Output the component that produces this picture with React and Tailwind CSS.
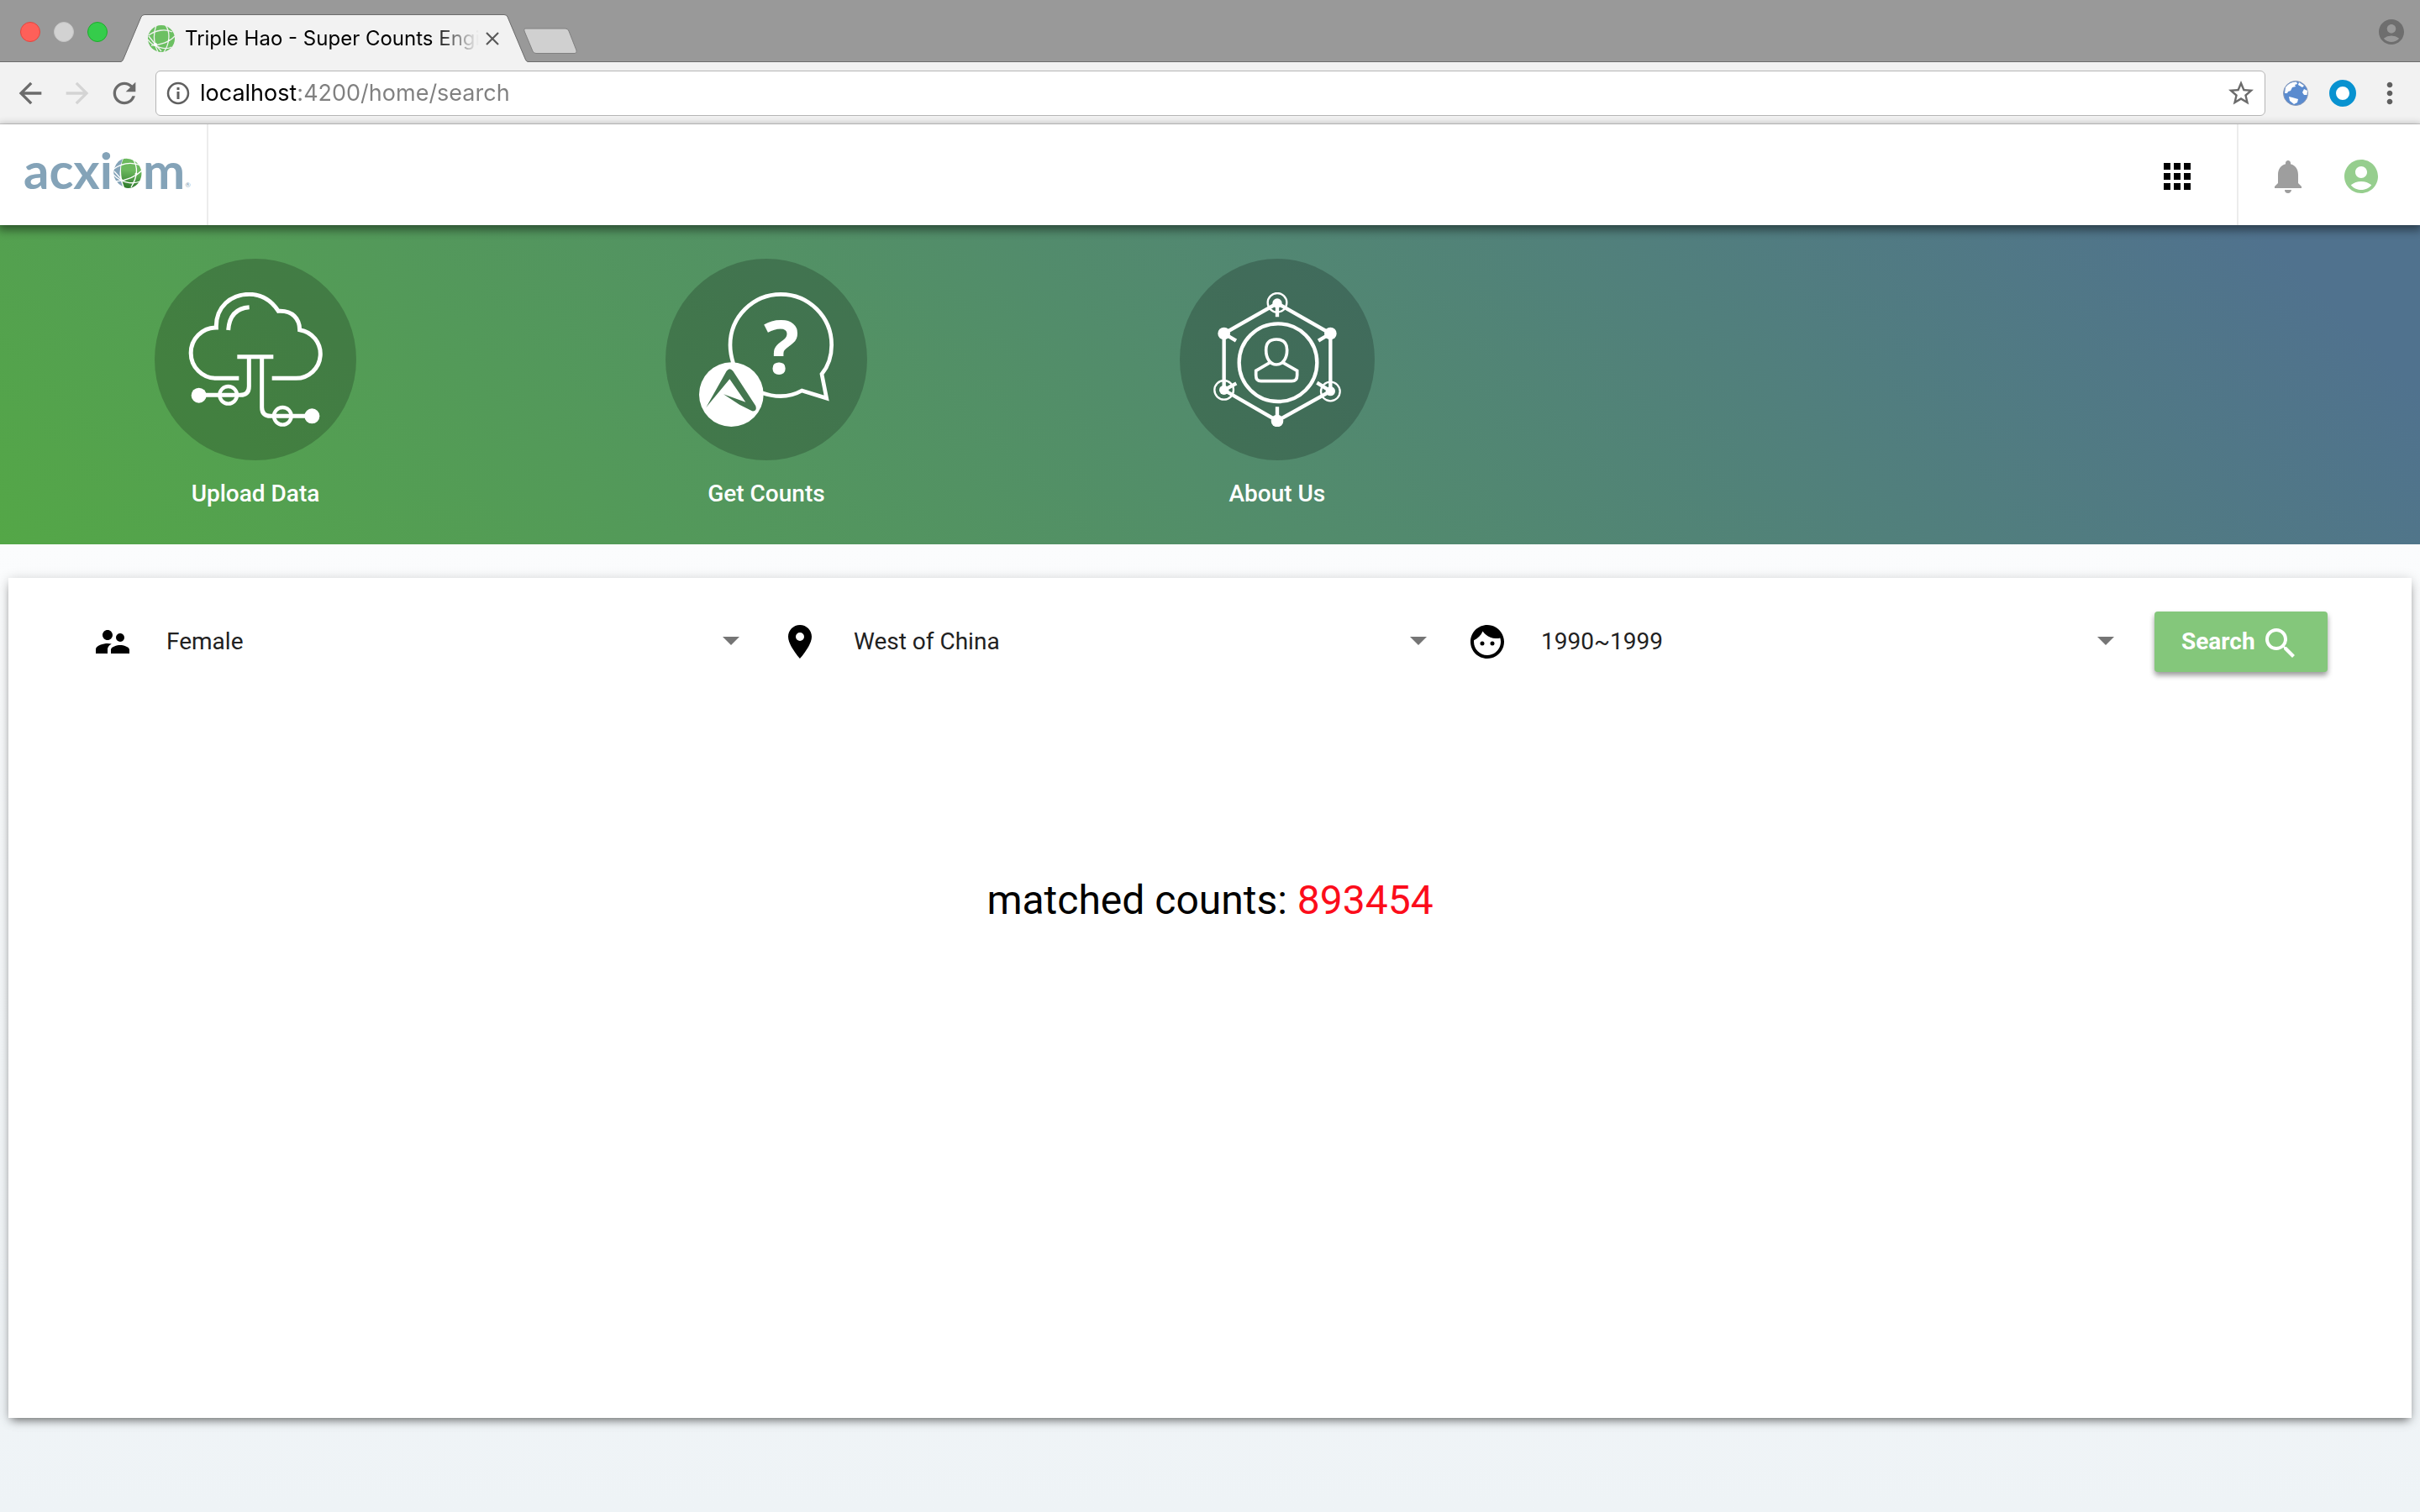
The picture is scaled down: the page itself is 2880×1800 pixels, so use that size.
import React from "react";
import {
  MdAccountCircle,
  MdApps,
  MdArrowBack,
  MdArrowForward,
  MdFace,
  MdMoreVert,
  MdNotifications,
  MdPlace,
  MdRefresh,
  MdSearch,
  MdStarBorder,
  MdSupervisorAccount,
} from "react-icons/md";

function Favicon() {
  return (
    <svg viewBox="0 0 32 32" className="size-8 shrink-0" fill="none" aria-hidden="true">
      <circle cx="16" cy="16" r="16" fill="#6cc062" />
      <g stroke="#f2f2f2" strokeWidth="1.3">
        <path d="M10 0C7 8 6 20 12 32" />
        <path d="M21 0C27 8 26 22 19 32" />
        <path d="M1 12C9 6 20 4 29 8" />
        <path d="M0 17C6 26 22 30 28 26" />
        <path d="M4 24C14 24 26 20 32 13" />
        <path d="M1 13L9 23L16 31" />
      </g>
      <circle cx="9" cy="23" r="2" fill="#fff" />
      <circle cx="25" cy="18" r="1" fill="#fff" />
    </svg>
  );
}

function BrowserTabs() {
  return (
    <div className="flex h-[74px] items-end gap-4 border-b border-[#6b6b6b] bg-[#999999] pl-6">
      <div className="flex gap-4 self-center pt-0.5">
        <button aria-label="Close window" className="size-6 rounded-full border border-[#e2463f] bg-[#fe6059]" />
        <button aria-label="Minimize window" className="size-6 rounded-full border border-[#c4c4c4] bg-[#d2d2d2]" />
        <button aria-label="Zoom window" className="size-6 rounded-full border border-[#1dad2b] bg-[#35cc4b]" />
      </div>
      <div className="relative -mb-px h-[57px] w-[484px]">
        <svg viewBox="0 0 484 57" preserveAspectRatio="none" className="absolute inset-0 size-full" aria-hidden="true">
          <path
            d="M0 56.5Q2 56 3 53L24 3Q25.500 .5 28 .5H456Q459 .5 460 3L481 53Q482 56 484 56.500V57H0Z"
            fill="#f2f2f2"
          />
          <path
            d="M0 56.5Q2 56 3 53L24 3Q25.500 .5 28 .5H456Q459 .5 460 3L481 53Q482 56 484 56.500"
            fill="none"
            stroke="#6b6b6b"
          />
        </svg>
        <div className="relative flex h-full items-center pr-8 pl-8">
          <Favicon />
          <span className="ml-3 w-[350px] overflow-hidden font-[Inter,sans-serif] text-[24px] leading-8 whitespace-nowrap text-black [mask-image:linear-gradient(to_right,black_84%,transparent)]">
            Triple Hao - Super Counts Engine
          </span>
          <button aria-label="Close tab" className="ml-2">
            <svg viewBox="0 0 16 16" className="size-4" stroke="#5a5a5a" strokeWidth="2.2" aria-hidden="true">
              <path d="M1 1L15 15M15 1L1 15" />
            </svg>
          </button>
        </div>
      </div>
      <button aria-label="New tab" className="-ml-[22px] mb-2">
        <svg viewBox="0 0 66 32" className="h-8 w-[66px]" aria-hidden="true">
          <path
            d="M3 1H51Q54 1 55 4L64 27Q65 30.500 62 30.500H16Q13 30.500 12 28L2 4Q1 1 3 1Z"
            fill="#d0d0d0"
            stroke="#808080"
          />
        </svg>
      </button>
      <button aria-label="Profile" className="mr-4 ml-auto self-center pt-0.5 text-[#6e6e6e]">
        <MdAccountCircle className="size-9" />
      </button>
    </div>
  );
}

function BrowserToolbar() {
  return (
    <div className="flex h-[74px] items-center border-b border-[#d2d2d2] bg-[#f2f2f2] pr-4 pl-4">
      <button aria-label="Back" className="text-[#6b6b6b]">
        <MdArrowBack className="size-10" />
      </button>
      <button aria-label="Forward" className="ml-4 text-[#d4d4d4]">
        <MdArrowForward className="size-10" />
      </button>
      <button aria-label="Reload" className="ml-4 text-[#6b6b6b]">
        <MdRefresh className="size-10" />
      </button>
      <div className="ml-[17px] flex h-[54px] flex-1 items-center rounded-md border border-[#b5b5b5] bg-white pr-2.5 pl-3">
        <svg viewBox="0 0 28 28" className="size-7 shrink-0" aria-hidden="true">
          <circle cx="14" cy="14" r="12" fill="none" stroke="#5f5f5f" strokeWidth="2.500" />
          <path d="M12.500 12H15.500V21H12.500ZM12.500 7H15.500V10H12.500Z" fill="#5f5f5f" />
        </svg>
        <input
          aria-label="Address"
          defaultValue="localhost:4200/home/search"
          className="ml-3 min-w-0 flex-1 bg-[linear-gradient(to_right,#000_114px,#808080_114px)] bg-clip-text font-[Inter,sans-serif] text-[27px] leading-10 text-transparent outline-none"
        />
        <button aria-label="Bookmark" className="text-[#6b6b6b]">
          <MdStarBorder className="size-9" />
        </button>
      </div>
      <button aria-label="Globe extension" className="ml-5">
        <svg viewBox="0 0 32 32" className="size-8" aria-hidden="true">
          <circle cx="16" cy="16" r="14.500" fill="#5a8bcf" stroke="#8a9ab8" />
          <path
            d="M4 9Q9 2 17 2.500L18 5L15 6L16 8L12 9L10 13L7 14L6 16L3 16ZM20 3L26 7L24 9L19 6ZM26 11L30 13L29.500 18L26 18L24 15ZM8 20L12 21L19 23L18 27L14 29L9 25Z"
            fill="#fff"
          />
        </svg>
      </button>
      <button aria-label="Ring extension" className="ml-6">
        <svg viewBox="0 0 32 32" className="size-8" aria-hidden="true">
          <circle cx="16" cy="16" r="12" fill="#fff" stroke="#0892d0" strokeWidth="8" />
        </svg>
      </button>
      <button aria-label="Menu" className="ml-5 text-[#5f5f5f]">
        <MdMoreVert className="size-10" />
      </button>
    </div>
  );
}

function Logo() {
  return (
    <a href="#home" aria-label="acxiom" className="flex items-end font-[Lato,sans-serif] text-[60px] leading-[60px] font-bold text-[#84a3b8]">
      <span>acxi</span>
      <svg viewBox="0 0 36 36" className="mb-2 size-9" fill="none" aria-hidden="true">
        <defs>
          <linearGradient id="globe" x1="0.5" y1="0" x2="0.4" y2="1">
            <stop offset="0.4" stopColor="#6cb95e" />
            <stop offset="1" stopColor="#2f7a2c" />
          </linearGradient>
        </defs>
        <path d="M12 1A18 18 0 0 0 12 34Q5 18 12 1Z" fill="#84a3b8" />
        <path d="M13 1A18 18 0 0 1 24 35Q18 37 14 35Q10 26 10 15Q10 6 13 1Z" fill="url(#globe)" />
        <g stroke="#fff" strokeWidth="1.300">
          <path d="M0 14C12 5 24 5 34 9" />
          <path d="M1 20C10 29 22 32 33 28" />
          <path d="M24 1C30 10 30 22 22 35" />
          <path d="M4 28C16 27 28 22 36 14" />
          <path d="M2 16L12 27" />
        </g>
        <circle cx="28" cy="19" r="1.500" fill="#fff" />
      </svg>
      <span>m</span>
      <span className="text-[8px] leading-6 font-normal">®</span>
    </a>
  );
}

function AppHeader() {
  return (
    <header className="relative z-10 flex h-[120px] items-stretch bg-white shadow-[0_4px_10px_2px_rgba(0,0,0,0.45)]">
      <div className="flex w-[248px] items-center border-r-2 border-[#ececec] pb-3 pl-7">
        <Logo />
      </div>
      <div className="ml-auto flex items-center pt-1 pr-[47px]">
        <button aria-label="Apps" className="text-black">
          <MdApps className="size-12" />
        </button>
      </div>
      <div className="flex items-center gap-[39px] border-l-2 border-[#ececec] pt-1 pr-[46px] pl-[35px]">
        <button aria-label="Notifications" className="text-[#9e9e9e]">
          <MdNotifications className="size-12" />
        </button>
        <button aria-label="Account" className="text-[#96ce8e]">
          <MdAccountCircle className="size-12" />
        </button>
      </div>
    </header>
  );
}

function CloudIcon() {
  return (
    <svg viewBox="192 174 480 480" className="size-40" fill="none" stroke="#fff" strokeWidth="15" aria-hidden="true">
      <path d="M373 481H292A90 90 0 0 1 292 300C290 225 345 181 410 181C455 181 490 205 514 241C565 238 590 270 590 308A87 87 0 0 1 577 481H491" />
      <path d="M335 309Q340 232 410 227" />
      <path d="M367 404H496" />
      <path d="M409 404V510Q409 541 378 541H230" />
      <path d="M455 404V585Q455 616 486 616H634" />
      <circle cx="335" cy="541" r="31" strokeWidth="13" />
      <circle cx="529" cy="616" r="31" strokeWidth="13" />
      <circle cx="230" cy="542" r="27" fill="#fff" stroke="none" />
      <circle cx="634" cy="616" r="27" fill="#fff" stroke="none" />
    </svg>
  );
}

function QuestionIcon() {
  return (
    <svg viewBox="186 174 480 480" className="size-40" fill="none" aria-hidden="true">
      <path
        d="M308 428C301 405 297 385 297 362A181 181 0 0 1 659 362C659 405 645 440 624 466L641 552L553 525C505 552 455 549 408 532"
        stroke="#fff"
        strokeWidth="14"
      />
      <text x="480" y="466" textAnchor="middle" fill="#fff" className="font-['Open_Sans',sans-serif] text-[265px] font-bold">
        ?
      </text>
      <circle cx="301" cy="539" r="115" fill="#fff" />
      <path
        d="M211 585L284 455Q295 440 307 455L388 580Q394 600 375 598L330 575L273 538L352 566L295 484Z"
        fill="#44764f"
      />
    </svg>
  );
}

function NetworkIcon() {
  return (
    <svg viewBox="192 174 456 480" className="h-40 w-[152px]" fill="none" stroke="#fff" strokeWidth="13" aria-hidden="true">
      <path d="M420 213L610 321V527L420 633L230 523V321Z" />
      <path d="M420 213V262M420 633V583M230 321L273 347M610 321L567 347M230 523L274 499M610 527L562 497" />
      <circle cx="423" cy="425" r="139" />
      <g strokeWidth="7">
        <circle cx="420" cy="211" r="34" />
        <circle cx="230" cy="523" r="34" />
        <circle cx="610" cy="528" r="34" />
      </g>
      <g fill="#fff" stroke="none">
        <circle cx="420" cy="213" r="17" />
        <circle cx="230" cy="321" r="22" />
        <circle cx="610" cy="321" r="22" />
        <circle cx="230" cy="523" r="17" />
        <circle cx="610" cy="527" r="17" />
        <circle cx="420" cy="633" r="22" />
      </g>
      <path d="M417 342C445 342 455 356 455 380C455 410 440 432 417 432C395 432 380 410 380 380C380 356 390 342 417 342Z" strokeWidth="11" />
      <path d="M394 425L344 454V470Q344 491 362 491H472Q491 491 491 470V454L440 425" strokeWidth="11" />
    </svg>
  );
}

const shortcuts = [
  { label: "Upload Data", Icon: CloudIcon },
  { label: "Get Counts", Icon: QuestionIcon },
  { label: "About Us", Icon: NetworkIcon },
];

function Banner() {
  return (
    <nav className="flex bg-[linear-gradient(45deg,#54a747_0%,#50728e_94%)] py-10">
      {shortcuts.map(({ label, Icon }) => (
        <a key={label} href={"#" + label.toLowerCase().replace(" ", "-")} className="flex w-[21.11%] flex-col items-center text-white">
          <span className="rounded-[50%] bg-black/20 p-10">
            <Icon />
          </span>
          <span className="mt-5 text-[28px] leading-10 font-medium">{label}</span>
        </a>
      ))}
    </nav>
  );
}

const filters = [
  { name: "Gender", Icon: MdSupervisorAccount, options: ["Female", "Male"] },
  { name: "Region", Icon: MdPlace, options: ["West of China", "East of China"] },
  { name: "Birth years", Icon: MdFace, options: ["1990~1999", "2000~2009"] },
];

function Filter({ name, Icon, options }) {
  return (
    <label className="flex flex-1 items-center gap-10 pr-12">
      <Icon className="size-12 shrink-0 text-black" />
      <span className="relative flex-1">
        <select aria-label={name} className="w-full appearance-none bg-transparent text-[28px] leading-10 text-[#212121] outline-none">
          {options.map((option) => (
            <option key={option}>{option}</option>
          ))}
        </select>
        <svg viewBox="0 0 20 10" className="pointer-events-none absolute top-3.5 right-0 h-2.5 w-5" aria-hidden="true">
          <path d="M0 0H20L10 10Z" fill="#757575" />
        </svg>
      </span>
    </label>
  );
}

function SearchCard() {
  return (
    <main className="mx-2.5 mt-10 mb-28 flex-1 bg-white shadow-[0_6px_10px_-4px_rgba(0,0,0,0.5),0_2px_14px_rgba(0,0,0,0.18)]">
      <form className="flex items-center px-[100px] pt-10" onSubmit={(event) => event.preventDefault()}>
        {filters.map((filter) => (
          <Filter key={filter.name} {...filter} />
        ))}
        <button
          type="submit"
          className="flex h-[72px] w-[206px] items-center rounded bg-[#84c77b] pl-8 text-[28px] leading-10 font-bold text-white shadow-[0_4px_6px_rgba(0,0,0,0.4)]"
        >
          Search
          <MdSearch className="mt-1 ml-1.5 size-12" />
        </button>
      </form>
      <p className="mt-60 text-center text-[48px] leading-[64px] text-black">
        matched counts: <span className="text-[#fc0d1b]">893454</span>
      </p>
    </main>
  );
}

export default function App() {
  return (
    <div className="flex min-h-screen flex-col bg-[linear-gradient(to_bottom,#ffffff_10%,#fbfcfd_36%,#eef3f6_100%)] font-[Roboto,sans-serif]">
      <BrowserTabs />
      <BrowserToolbar />
      <AppHeader />
      <Banner />
      <SearchCard />
    </div>
  );
}
